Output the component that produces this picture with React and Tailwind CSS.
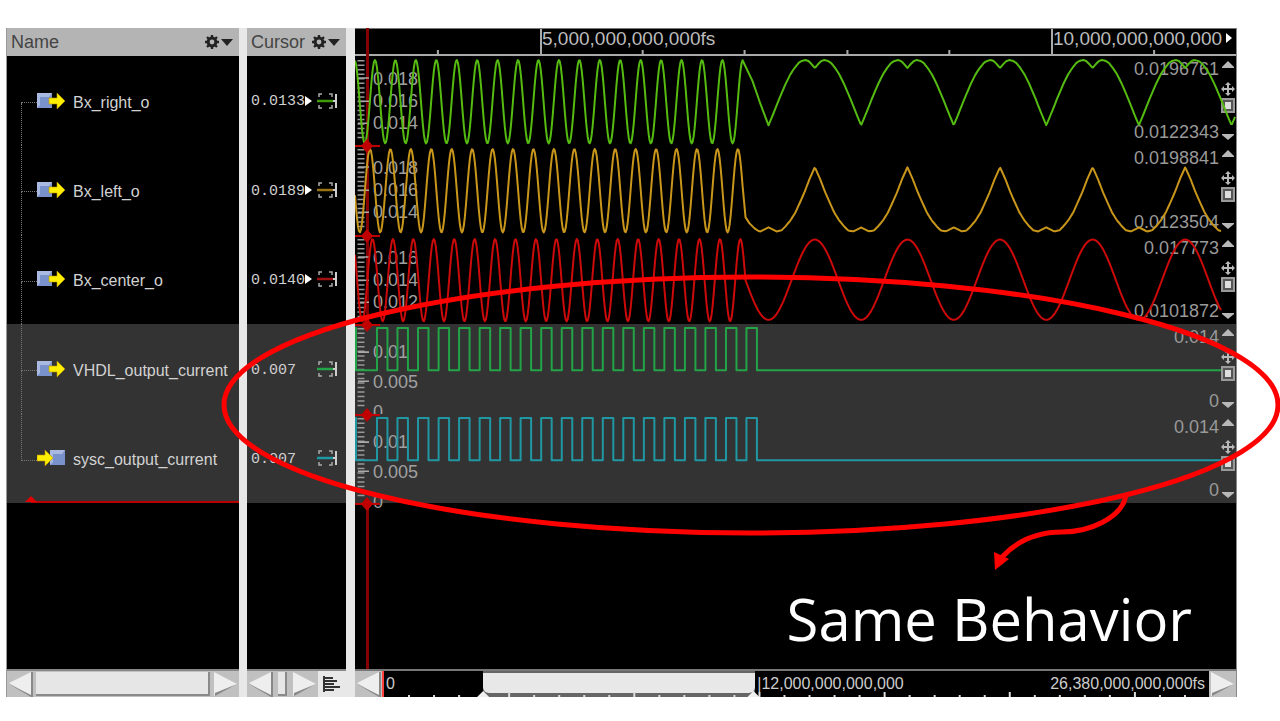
const SIGNALS = [
  { name: 'Bx_right_o', dir: 'out', cursor: '0.0133', more: true, max: '0.0196761', min: '0.0122343', scale: ['0.018', '0.016', '0.014'], color: '#55bb11', mark: '#3f9a08' },
  { name: 'Bx_left_o', dir: 'out', cursor: '0.0189', more: true, max: '0.0198841', min: '0.0123504', scale: ['0.018', '0.016', '0.014'], color: '#c8961a', mark: '#9a7414' },
  { name: 'Bx_center_o', dir: 'out', cursor: '0.0140', more: true, max: '0.017773', min: '0.0101872', scale: ['0.016', '0.014', '0.012'], color: '#cc0a0a', mark: '#a01010' },
  { name: 'VHDL_output_current', dir: 'out', cursor: '0.007', selected: true, max: '0.014', min: '0', scale: ['0.01', '0.005', '0'], color: '#22a447', mark: '#22a447' },
  { name: 'sysc_output_current', dir: 'in', cursor: '0.007', selected: true, max: '0.014', min: '0', scale: ['0.01', '0.005', '0'], color: '#2098a4', mark: '#2098a4' },
];

const toPath = (pts) => 'M' + pts.map(([x, y]) => `${x.toFixed(1)} ${y.toFixed(1)}`).join('L');

// fast oscillation until the clock slows down
function fast(firstPeak, end, top, bottom) {
  const pts = [];
  const mid = (top + bottom) / 2;
  const amp = (bottom - top) / 2;
  for (let x = 0; x <= end; x += 1) {
    pts.push([x, mid - amp * Math.cos(((x - firstPeak) / 20.46) * Math.PI * 2)]);
  }
  return pts;
}

// half period profile, mirrored around each trough
function slow(profile, start, end) {
  const pts = [];
  for (let x = start; x <= end; x += 1) {
    const phase = (((x - 414) % 92.7) + 92.7) % 92.7;
    const d = Math.min(phase, 92.7 - phase);
    let i = 1;
    while (i < profile.length - 1 && profile[i][0] < d) i += 1;
    const [x0, y0] = profile[i - 1];
    const [x1, y1] = profile[i];
    pts.push([x, y0 + ((y1 - y0) * (d - x0)) / (x1 - x0)]);
  }
  return pts;
}

function pulses(high, low) {
  const pts = [[0, high], [1, high], [1, low], [22, low]];
  for (let i = 0; i < 19; i += 1) {
    const x = 22 + i * 20.55;
    pts.push([x, low], [x, high], [x + 10.5, high], [x + 10.5, low]);
  }
  pts.push([867, low]);
  return pts;
}

const RIGHT = [[0, 69], [5, 57], [11, 42], [17, 28], [22, 18], [26, 12], [30, 7], [33, 5], [37, 4], [40, 5], [43, 8], [46.4, 12]];
const LEFT = [[0, 82], [4, 84], [8, 86], [13, 85], [17, 81], [22, 75], [27, 67], [32, 56], [36, 47], [41, 34], [46.4, 22]];
const CENTER = Array.from({ length: 25 }, (_, i) => [i * 1.935, 44.5 + 40 * Math.cos((i / 24) * Math.PI)]);

const WAVES = [
  toPath([...fast(20, 388, 4, 87), [398, 25], [406, 48], ...slow(RIGHT, 414, 881)]),
  toPath([...fast(15, 388, 4, 87), [391, 72], [395, 78], [400, 83], ...slow(LEFT, 404, 867)]),
  toPath([...fast(17.5, 389, 4, 86), ...slow(CENTER, 391, 867)]),
  toPath(pulses(4, 46)),
  toPath(pulses(4, 46)),
];

function Gear() {
  return (
    <svg width="14" height="14" viewBox="0 0 14 14" fill="none" stroke="#222">
      <circle cx="7" cy="7" r="3.9" strokeWidth="3" />
      <path d="M7 0v3M7 11v3M0 7h3M11 7h3M2 2l2 2M10 10l2 2M12 2l-2 2M4 10l-2 2" strokeWidth="2.4" />
    </svg>
  );
}

function ColumnHeader({ title }) {
  return (
    <div className="flex h-7 items-center justify-between bg-[#b4b4b4] pr-1.5 pl-1 text-lg text-[#444]">
      <span>{title}</span>
      <button type="button" aria-label={`${title} options`} className="flex items-center gap-0.5">
        <Gear />
        <svg width="12" height="7" viewBox="0 0 12 7"><path d="M0 0h12L6 7z" fill="#222" /></svg>
      </button>
    </div>
  );
}

function PortIcon({ dir }) {
  const boxX = dir === 'out' ? 0 : 13;
  const arrowX = dir === 'out' ? 12 : 0;
  return (
    <svg className="shrink-0" width="28" height="18" viewBox="0 0 28 18">
      <rect x={boxX} y="1" width="15" height="15" fill="#7a92cc" />
      <path d={`M${boxX} 16V1h15l-3 4H${boxX + 3}v8z`} fill="#a9b9e2" />
      <path d={`M${arrowX} 6h8V1l8 8-8 8v-5h-8z`} fill="#ffee00" stroke="#b89000" strokeWidth="0.6" />
    </svg>
  );
}

function TreeBranch({ first, last }) {
  return (
    <span className="ml-3.5 flex h-full w-4 shrink-0 flex-col">
      <span className={`h-[47px] border-b border-dotted border-[#777] ${first ? '' : 'border-l'}`} />
      <span className={`flex-1 border-dotted border-[#777] ${last ? '' : 'border-l'}`} />
    </span>
  );
}

function BracketIcon({ color }) {
  return (
    <svg width="21" height="16" viewBox="0 0 21 16" fill="none">
      <path d="M5 1H2v3M2 12v3h3M12 1h3v3M15 12v3h-3" stroke="#aaa" strokeWidth="1.5" />
      <path d="M19 1v14M16 8h3" stroke="#ccc" strokeWidth="2" />
      <path d="M0 8h16" stroke={color} strokeWidth="2.5" />
    </svg>
  );
}

function ScrollArrow({ side, label }) {
  return (
    <button type="button" aria-label={label} className="flex shrink-0 items-center">
      <svg width="27" height="26" viewBox="0 0 27 26">
        {side === 'left' ? (
          <>
            <path d="M2 12L24 1v24z" fill="#eee" />
            <path d="M2 13l22 11V1h2v25h-2z" fill="#888" />
          </>
        ) : (
          <>
            <path d="M2 1v24l23-12z" fill="#eee" />
            <path d="M3 25l22-12-22 9z" fill="#888" />
          </>
        )}
      </svg>
    </button>
  );
}

const thumb = 'border-r-2 border-b-2 border-[#8a8a8a] bg-[#e6e6e6]';

function NameColumn() {
  return (
    <section className="flex w-[233px] shrink-0 flex-col border-l border-[#999] bg-black">
      <ColumnHeader title="Name" />
      <div className="relative grid h-[447px] grid-rows-5">
        {SIGNALS.map((s, i) => (
          <div key={s.name} className={`flex items-center ${s.selected ? 'bg-[#333]' : ''}`}>
            <TreeBranch first={i === 0} last={i === SIGNALS.length - 1} />
            <PortIcon dir={s.dir} />
            <span className="pt-1 pl-2 text-base whitespace-nowrap text-[#d2d2d2]">{s.name}</span>
          </div>
        ))}
        <svg className="absolute bottom-0 left-4 h-2 w-[216px]" viewBox="0 0 216 8">
          <path d="M8 6h208v2H8z" fill="#b80000" />
          <path d="M2 7l6-6 6 6z" fill="#e00000" />
        </svg>
      </div>
      <div className="flex-1" />
      <div className="flex h-7 items-center border-t-2 border-[#888] bg-[#c0c0c0]">
        <ScrollArrow side="left" label="Scroll names left" />
        <div className={`mx-0.5 h-6 flex-1 ${thumb}`} />
        <ScrollArrow side="right" label="Scroll names right" />
      </div>
    </section>
  );
}

function CursorColumn() {
  return (
    <section className="flex w-[99px] shrink-0 flex-col bg-black">
      <ColumnHeader title="Cursor" />
      <div className="grid h-[447px] grid-rows-5">
        {SIGNALS.map((s) => (
          <div key={s.name} className={`flex items-center justify-between pr-2 pl-1 ${s.selected ? 'bg-[#333]' : ''}`}>
            <span className="flex items-center font-['Liberation_Mono',monospace] text-[15px] text-[#d0d0d0]">
              <span className="pt-1">{s.cursor}</span>
              {s.more && <svg width="7" height="10" viewBox="0 0 7 10"><path d="M0 0l7 5-7 5z" fill="#fff" /></svg>}
            </span>
            <BracketIcon color={s.mark} />
          </div>
        ))}
      </div>
      <div className="flex-1" />
      <div className="flex h-7 items-center border-t-2 border-[#888] bg-[#c0c0c0]">
        <ScrollArrow side="left" label="Scroll values left" />
        <div className={`mx-1 h-6 flex-1 ${thumb}`} />
        <ScrollArrow side="right" label="Scroll values right" />
        <button type="button" aria-label="Value format" className="flex h-full w-7 items-center justify-center bg-[#e8e8e8]">
          <svg width="18" height="16" viewBox="0 0 18 16" stroke="#333" strokeWidth="2">
            <path d="M1 0v16M2 2h8M2 5h12M2 8h9M2 11h15M2 14h9" />
          </svg>
        </button>
      </div>
    </section>
  );
}

function Ruler() {
  return (
    <div className="relative flex h-7 border-t border-b-2 border-t-[#777] border-b-[#aaa] text-[19px] leading-5 text-[#bbb]">
      <div className="w-[21%]" />
      <div className="w-[58%] border-l-2 border-[#aaa]">5,000,000,000,000fs</div>
      <div className="flex flex-1 items-start justify-between border-l-2 border-[#aaa] pr-1">
        <span>10,000,000,000,000</span>
        <svg className="mt-1 -ml-1 shrink-0" width="6" height="10" viewBox="0 0 6 10"><path d="M0 0l6 5-6 5z" fill="#fff" /></svg>
      </div>
      <svg className="absolute bottom-0 left-0 h-1 w-full" viewBox="0 0 882 4" preserveAspectRatio="none">
        <path d="M83 0v4M288 0v4M390 0v4M493 0v4M595 0v4M800 0v4" stroke="#aaa" strokeWidth="2" />
      </svg>
    </div>
  );
}

function RowControls() {
  return (
    <svg width="14" height="80" viewBox="0 0 14 80" fill="#b8b8b8">
      <path d="M1 7l6-6 6 6v1H1z" />
      <path d="M7 22l3 3H8v3h3v-2l3 3-3 3v-2H8v3h2l-3 3-3-3h2v-3H3v2l-3-3 3-3v2h3v-3H4z" />
      <rect x="1" y="39" width="12" height="13" fill="#555" stroke="#999" strokeWidth="2" />
      <rect x="4" y="42" width="6" height="7" fill="#ddd" />
      <path d="M1 74v1l6 5 6-5v-1z" />
    </svg>
  );
}

function WaveRow({ signal, wave }) {
  const digital = signal.selected;
  return (
    <div className={`relative flex min-h-0 justify-between ${digital ? 'bg-[#333]' : ''}`}>
      <div className="flex flex-col pt-3 pl-[18px] text-lg text-[#a0a0a0]">
        {signal.scale.map((v) => (
          <span key={v} className={digital ? 'h-[30px] shrink-0 leading-[32px]' : 'h-[22px] leading-[22px]'}>{v}</span>
        ))}
      </div>
      <div className="flex gap-0.5 pr-px">
        <div className="flex flex-col justify-between py-0.5 text-right text-lg leading-[22px] text-[#999]">
          <span>{signal.max}</span>
          <span>{signal.min}</span>
        </div>
        <div className="pt-1"><RowControls /></div>
      </div>
      <svg className="absolute inset-0 h-full w-full" viewBox="0 0 882 89" preserveAspectRatio="none" fill="none">
        <path d="M6 4v81" stroke="#999" strokeWidth="7" strokeDasharray="1.5 3" />
        <path d={digital ? 'M3 28h11M3 57h11' : 'M3 22h11M3 45h11M3 67h11'} stroke="#aaa" strokeWidth="1.5" />
        <path d={wave} stroke={signal.color} strokeWidth="2" strokeLinejoin="round" />
      </svg>
      <svg className="absolute -bottom-2 left-0 z-10" width="26" height="14" viewBox="0 0 26 14" fill="#c00000">
        <path d="M12 0l6 7-6 7-6-7z" />
        <path d="M0 6h25v2H0z" />
      </svg>
    </div>
  );
}

function Overview() {
  const ticks = Array.from({ length: 32 }, (_, i) => `M${25 + i * 25} ${i % 5 === 4 ? 21 : 24}v5`).join('');
  return (
    <div className="relative flex h-full flex-1 items-center border-l-2 border-[#ff4040] bg-black text-base leading-5 text-[#ccc]">
      <span className="w-[12%] pl-0.5">0</span>
      <div className="h-full w-[33%] bg-[#666]">
        <div className="mt-0.5 h-5 rounded-b-md bg-[#e8e8e8]" />
      </div>
      <div className="flex flex-1 justify-between pr-1 pl-0.5">
        <span>|12,000,000,000,000</span>
        <span>26,380,000,000,000fs</span>
      </div>
      <svg className="absolute inset-0 h-full w-full" viewBox="0 0 824 26" preserveAspectRatio="none">
        <path d={ticks} stroke="#ddd" strokeWidth="2" />
        <path d="M93 26l6-6 6 6zM363 26l6-6 6 6z" fill="#f0f0f0" />
      </svg>
    </div>
  );
}

function WaveColumn() {
  return (
    <section className="relative flex min-w-0 flex-1 flex-col border-r border-[#888] bg-black">
      <Ruler />
      <div className="absolute top-0 bottom-7 left-[11px] w-[3px] bg-[#850000]" />
      <div className="grid h-[447px] grid-rows-5">
        {SIGNALS.map((s, i) => (
          <WaveRow key={s.name} signal={s} wave={WAVES[i]} />
        ))}
      </div>
      <div className="flex flex-1 items-end justify-end pr-11 pb-3.5">
        <p className="font-['Open_Sans',sans-serif] text-[58px] leading-[72px] text-white">Same Behavior</p>
      </div>
      <div className="flex h-7 items-center border-t-2 border-[#777] bg-[#c0c0c0]">
        <ScrollArrow side="left" label="Scroll time left" />
        <Overview />
        <ScrollArrow side="right" label="Scroll time right" />
      </div>
    </section>
  );
}

function Annotation() {
  return (
    <svg className="pointer-events-none absolute inset-0 z-20 h-full w-full" viewBox="0 0 1280 721" preserveAspectRatio="none" fill="none" stroke="#ff0000" strokeWidth="5">
      <ellipse cx="751" cy="405" rx="527" ry="128" />
      <path d="M1126 496C1121 518 1090 532 1062 532C1036 532 1016 542 1002 557" />
      <path d="M994 552l15 7-14 11z" fill="#ff0000" stroke="none" />
    </svg>
  );
}

export default function App() {
  return (
    <main className="relative flex min-h-screen bg-white pt-7 pr-[43px] pb-6 pl-1.5 font-['Liberation_Sans',Arial,sans-serif]">
      <NameColumn />
      <div className="w-2 shrink-0 bg-[#e8e8e8]" />
      <CursorColumn />
      <div className="w-[9px] shrink-0 bg-[#e8e8e8]" />
      <WaveColumn />
      <Annotation />
    </main>
  );
}
